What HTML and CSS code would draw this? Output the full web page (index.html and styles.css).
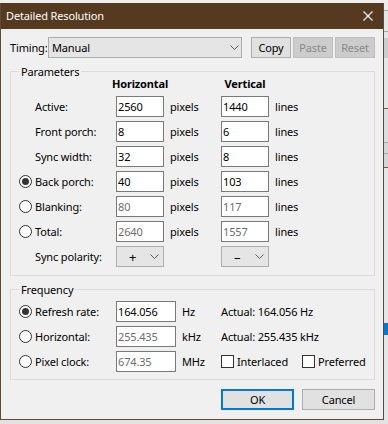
FILE: index.html
```html
<!DOCTYPE html>
<html>
<head>
<meta charset="utf-8">
<link rel="stylesheet" href="styles.css">
</head>
<body>
<div class="desktop">
  <div class="top-strip"></div>
  <div class="middle">
    <div class="dialog">
      <div class="titlebar">
        <span class="title">Detailed Resolution</span>
        <span class="close"><svg width="10" height="10" viewBox="0 0 10 10"><path d="M0.5 0.5 L9.5 9.5 M9.5 0.5 L0.5 9.5" stroke="#fff" stroke-width="1.1" fill="none"/></svg></span>
      </div>
      <div class="body">
        <div class="timing-row">
          <span class="timing-label">Timing:</span>
          <div class="combo combo-timing"><span>Manual</span><svg class="chev" width="9" height="5" viewBox="0 0 9 5"><path d="M0.5 0.5 L4.5 4.5 L8.5 0.5" stroke="#5a5a5a" fill="none"/></svg></div>
          <div class="tbuttons">
            <button class="btn">Copy</button>
            <button class="btn btn-disabled">Paste</button>
            <button class="btn btn-disabled">Reset</button>
          </div>
        </div>

        <div class="group group-params">
          <span class="legend">Parameters</span>
          <div class="params-grid">
            <span></span><span></span>
            <span class="head"><b>Horizontal</b></span><span></span>
            <span class="head"><b>Vertical</b></span><span></span>

            <span></span><span class="lbl">Active:</span>
            <span class="field">2560</span><span class="unit">pixels</span>
            <span class="field">1440</span><span class="unit">lines</span>

            <span></span><span class="lbl">Front porch:</span>
            <span class="field">8</span><span class="unit">pixels</span>
            <span class="field">6</span><span class="unit">lines</span>

            <span></span><span class="lbl">Sync width:</span>
            <span class="field">32</span><span class="unit">pixels</span>
            <span class="field">8</span><span class="unit">lines</span>

            <span class="radio on"></span><span class="lbl">Back porch:</span>
            <span class="field">40</span><span class="unit">pixels</span>
            <span class="field">103</span><span class="unit">lines</span>

            <span class="radio"></span><span class="lbl">Blanking:</span>
            <span class="field dim">80</span><span class="unit">pixels</span>
            <span class="field dim">117</span><span class="unit">lines</span>

            <span class="radio"></span><span class="lbl">Total:</span>
            <span class="field dim">2640</span><span class="unit">pixels</span>
            <span class="field dim">1557</span><span class="unit">lines</span>

            <span></span><span class="lbl">Sync polarity:</span>
            <div class="combo combo-pol"><span class="pol">+</span><svg class="chev" width="9" height="5" viewBox="0 0 9 5"><path d="M0.5 0.5 L4.5 4.5 L8.5 0.5" stroke="#5a5a5a" fill="none"/></svg></div><span></span>
            <div class="combo combo-pol"><span class="pol">–</span><svg class="chev" width="9" height="5" viewBox="0 0 9 5"><path d="M0.5 0.5 L4.5 4.5 L8.5 0.5" stroke="#5a5a5a" fill="none"/></svg></div><span></span>
          </div>
        </div>

        <div class="group group-freq">
          <span class="legend">Frequency</span>
          <div class="freq-grid">
            <span class="radio on"></span><span class="lbl">Refresh rate:</span>
            <span class="field">164.056</span><span class="unit">Hz</span>
            <span class="actual">Actual: 164.056 Hz</span>

            <span class="radio"></span><span class="lbl">Horizontal:</span>
            <span class="field dim">255.435</span><span class="unit">kHz</span>
            <span class="actual">Actual: 255.435 kHz</span>

            <span class="radio"></span><span class="lbl">Pixel clock:</span>
            <span class="field dim">674.35</span><span class="unit">MHz</span>
            <div class="checks">
              <span class="check"><span class="box"></span>Interlaced</span>
              <span class="check"><span class="box"></span>Preferred</span>
            </div>
          </div>
        </div>

        <div class="actions">
          <button class="btn btn-wide btn-default">OK</button>
          <button class="btn btn-wide">Cancel</button>
        </div>
      </div>
    </div>
    <div class="right-strip">
      <div class="rs rs-7"></div>
      <div class="rs rs-line"></div>
      <div class="rs rs-20"></div>
      <div class="rs rs-line"></div>
      <div class="rs rs-6"></div>
      <div class="rs rs-block"></div>
      <div class="rs rs-50"></div>
      <div class="rs rs-dark"></div>
      <div class="rs rs-33"></div>
      <div class="rs rs-line"></div>
      <div class="rs rs-10"></div>
      <div class="rs rs-line"></div>
      <div class="rs rs-13"></div>
      <div class="rs rs-dark"></div>
      <div class="rs rs-155"></div>
      <div class="rs rs-blue"></div>
    </div>
  </div>
  <div class="bottom-strip"></div>
</div>
</body>
</html>
```
FILE: styles.css
```css
* { box-sizing: border-box; }
html, body { margin: 0; padding: 0; }
body {
  width: 388px;
  height: 424px;
  overflow: hidden;
  background: #e3e3e3;
  font-family: "Noto Sans", "DejaVu Sans", sans-serif;
  font-size: 11px;
  letter-spacing: -0.15px;
  color: #000;
}
.desktop {
  width: 388px;
  height: 424px;
  display: flex;
  flex-direction: column;
  background: #e3e3e3;
}
.top-strip { height: 3px; flex: none; background: #eeeeee; }
.bottom-strip { flex: 1; background: #e3e3e3; }
.middle { display: flex; flex: none; height: 417px; }

.dialog {
  width: 384px;
  height: 417px;
  flex: none;
  background: #f0f0f0;
  border: 1px solid #5e4a36;
  border-top: 0;
  display: flex;
  flex-direction: column;
}
.titlebar {
  height: 26px;
  flex: none;
  background: #553a1f;
  color: #fff;
  display: flex;
  align-items: center;
  padding-left: 5px;
}
.title { line-height: 16px; }
.close { margin-left: auto; width: 30px; display: flex; justify-content: center; }
.close svg { display: block; }

.body { padding: 8px 8px 0 9px; }

.timing-row { display: flex; align-items: center; height: 21px; }
.timing-label { width: 38px; }
.combo {
  height: 21px;
  border: 1px solid #adadad;
  background: #e5e5e5;
  display: flex;
  align-items: center;
  justify-content: space-between;
}
.combo-timing { width: 194px; padding: 0 2px 0 3px; }
.combo-pol { width: 48px; padding: 0 4px 0 12px; }
.pol { font-size: 13px; letter-spacing: 0; }
.chev { display: block; }
.tbuttons { display: flex; gap: 2px; margin-left: 9px; }
.btn {
  width: 40px;
  height: 21px;
  border: 1px solid #adadad;
  background: #e1e1e1;
  font: inherit;
  letter-spacing: inherit;
  color: #000;
  padding: 0;
  margin: 0;
  display: flex;
  align-items: center;
  justify-content: center;
}
.btn-disabled { background: #cccccc; border-color: #bfbfbf; color: #8a8a8a; }
.btn-wide { width: 73px; }
.btn-default { border: 2px solid #0078d7; }

.group {
  position: relative;
  width: 365px;
  border: 1px solid #dcdcdc;
}
.legend {
  position: absolute;
  left: 8px;
  top: -8px;
  padding: 0 2px;
  line-height: 15px;
  background: #f0f0f0;
}
.group-params { margin-top: 13px; padding: 4px 0 8px 8px; }
.group-freq { margin-top: 13px; padding: 11px 0 7px 8px; }

.params-grid {
  display: grid;
  grid-template-columns: 16px 81px 48px 57px 48px 1fr;
  grid-template-rows: 16px;
  grid-auto-rows: 21px;
  row-gap: 4px;
  align-items: center;
}
.freq-grid {
  display: grid;
  grid-template-columns: 16px 81px 60px 45px 1fr;
  grid-auto-rows: 21px;
  row-gap: 4px;
  align-items: center;
}
.head { display: flex; justify-content: center; white-space: nowrap; line-height: 16px; }
.lbl { white-space: nowrap; }
.field {
  height: 21px;
  border: 1px solid #7a7a7a;
  background: #fff;
  padding-left: 1px;
  display: flex;
  align-items: center;
}
.dim { color: #6d6d6d; }
.unit { padding-left: 6px; }
.actual { white-space: nowrap; }

.radio {
  width: 13px;
  height: 13px;
  border: 1px solid #333;
  border-radius: 50%;
  background: #fff;
  display: flex;
  align-items: center;
  justify-content: center;
}
.radio.on::after {
  content: "";
  width: 7px;
  height: 7px;
  border-radius: 50%;
  background: #333;
}
.checks { display: flex; align-items: center; }
.check { display: flex; align-items: center; gap: 3px; white-space: nowrap; }
.check:first-child { width: 81px; }
.box { width: 13px; height: 13px; border: 1px solid #333; background: #fff; }

.actions {
  display: flex;
  justify-content: flex-end;
  gap: 8px;
  margin-top: 9px;
}

.right-strip { flex: 1; display: flex; flex-direction: column; background: #e6e6e6; }
.rs { flex: none; }
.rs-7 { height: 7px; background: #ececec; }
.rs-line { height: 1px; background: #a8a8a8; }
.rs-dark { height: 1px; background: #6a5e52; }
.rs-20 { height: 20px; }
.rs-6 { height: 6px; }
.rs-block { height: 20px; background: #cdcdcd; }
.rs-50 { height: 50px; }
.rs-33 { height: 33px; background: #dedede; }
.rs-10 { height: 10px; background: #d6d6d6; }
.rs-13 { height: 13px; background: #d6d6d6; }
.rs-155 { height: 155px; }
.rs-blue { height: 12px; background: #0078d7; }
```
